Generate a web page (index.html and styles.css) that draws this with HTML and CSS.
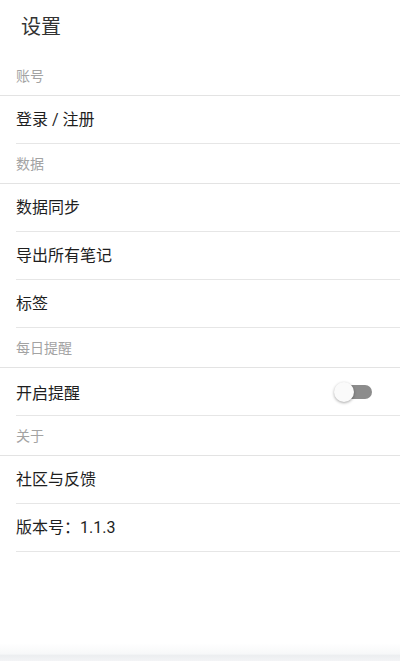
FILE: index.html
```html
<!DOCTYPE html>
<html lang="zh">
<head>
<meta charset="utf-8">
<title>设置</title>
<link rel="stylesheet" href="styles.css">
</head>
<body>
<div class="app">
  <div class="titlebar">设置</div>
  <div class="section">账号</div>
  <div class="item">登录 / 注册</div>
  <div class="section">数据</div>
  <div class="item">数据同步</div>
  <div class="item">导出所有笔记</div>
  <div class="item">标签</div>
  <div class="section">每日提醒</div>
  <div class="item item-switch">
    <span>开启提醒</span>
    <span class="switch"><span class="track"></span><span class="thumb"></span></span>
  </div>
  <div class="section">关于</div>
  <div class="item">社区与反馈</div>
  <div class="item">版本号：1.1.3</div>
  <div class="bottom"></div>
</div>
</body>
</html>
```

FILE: styles.css
```css
* { box-sizing: border-box; }
html, body { margin: 0; padding: 0; background: #fff; }
body {
  font-family: Roboto, "Noto Sans CJK SC", "Noto Sans", sans-serif;
  color: #222;
}
.app {
  width: 400px;
  height: 661px;
  display: flex;
  flex-direction: column;
  overflow: hidden;
}
.titlebar {
  height: 56px;
  padding-left: 21px;
  padding-bottom: 5px;
  font-size: 20px;
  color: #333;
  display: flex;
  align-items: center;
}
.section {
  height: 40px;
  padding-left: 16px;
  padding-bottom: 2px;
  font-size: 14px;
  color: #a3a3a3;
  display: flex;
  align-items: center;
  border-bottom: 1px solid #e3e3e3;
}
.item {
  height: 48px;
  margin-left: 16px;
  padding-bottom: 3px;
  font-size: 16px;
  color: #1e1e1e;
  display: flex;
  align-items: center;
  border-bottom: 1px solid #e6e6e6;
}
.item-switch {
  justify-content: space-between;
  padding-right: 26px;
  padding-bottom: 0;
}
.switch {
  position: relative;
  width: 40px;
  height: 20px;
  display: inline-block;
}
.track {
  position: absolute;
  left: 10px;
  top: 3px;
  width: 28px;
  height: 14px;
  border-radius: 7px;
  background: #8c8c8c;
}
.thumb {
  position: absolute;
  left: 0;
  top: 0;
  width: 20px;
  height: 20px;
  border-radius: 50%;
  background: #fafafa;
  box-shadow: 0 1px 3px rgba(0,0,0,0.35);
}
.bottom {
  margin-top: auto;
  height: 18px;
  background: linear-gradient(to bottom, #ffffff 0%, #f7f8f9 60%, #eceef0 70%, #f3f4f6 100%);
}
```
